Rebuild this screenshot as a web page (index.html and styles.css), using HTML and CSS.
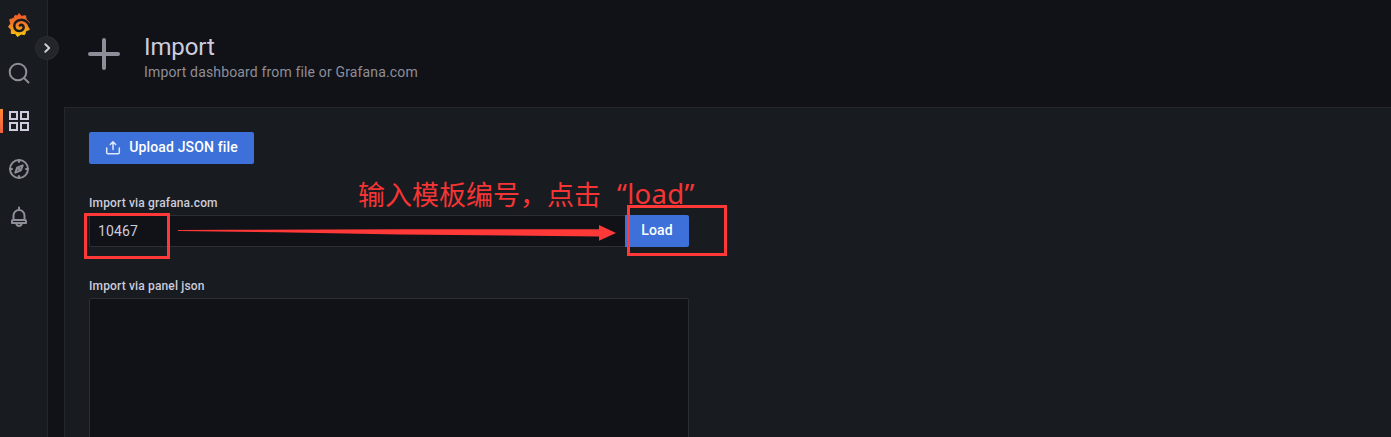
FILE: index.html
```html
<!DOCTYPE html>
<html lang="en">
<head>
<meta charset="utf-8">
<title>Import</title>
<link rel="stylesheet" href="styles.css">
</head>
<body>
<div class="app">
  <nav class="sidebar">
    <a class="logo"><svg width="24" height="26" viewBox="0 0 24 26">
      <defs><linearGradient id="flame" x1="0" y1="0" x2="0" y2="1"><stop offset="0" stop-color="#f05a28"/><stop offset=".45" stop-color="#f47a25"/><stop offset="1" stop-color="#fbca0a"/></linearGradient></defs>
      <path fill="url(#flame)" stroke="url(#flame)" stroke-width="1" stroke-linejoin="round" d="M12 1.500L14.300 4.300L18.500 3.700L19.200 7.500L22.300 10.500L20.800 13.500L22.300 17.500L18.700 19L17.700 22.600L14 22L10.500 24.500L8.300 21.500L4.300 21.500L4.300 17.700L1.500 14.800L3.700 11.700L2.700 7.500L6.700 6.500L8 3.500L10.500 4Z"/>
      <path class="swirl" d="M23 15C21 10 17.500 7.600 13.500 7.900C9.300 8.200 7 11.200 7.300 14.300C7.600 17.500 10 19.200 12.700 19C15.300 18.700 16.900 16.800 16.600 14.900C16.200 12.900 14 12.300 12.900 13.500"/>
    </svg></a>
    <a class="item"><svg width="24" height="24" viewBox="0 0 24 24"><circle cx="11" cy="11" r="8.300"/><path d="M17 17L21.500 21.500"/></svg></a>
    <a class="item active"><svg width="24" height="24" viewBox="0 0 24 24"><path d="M3 3H10V10H3ZM14 3H21V10H14ZM3 14H10V21H3ZM14 14H21V21H14Z"/></svg></a>
    <a class="item"><svg width="24" height="24" viewBox="0 0 24 24"><circle cx="12" cy="12" r="9"/><path d="M12 3V5M12 19V21M3 12H5M19 12H21M15.700 8.300L13.800 13.300L8.300 15.700L10.200 10.700Z"/><circle cx="12" cy="12" r=".6"/></svg></a>
    <a class="item"><svg width="24" height="24" viewBox="0 0 24 24"><path d="M12 2.500V5M6.500 15V10.500A5.500 5.500 0 0 1 17.500 10.500V15M6 15H18Q19 15 19 16V18H5V16Q5 15 6 15M9.200 18.500Q10 21 12 21T14.800 18.500"/></svg></a>
    <button class="toggle"><svg width="24" height="24" viewBox="0 0 24 24"><path d="M10.300 8.200L14.200 12L10.300 15.800"/></svg></button>
  </nav>
  <main class="main">
    <header class="header">
      <svg class="plus" width="32" height="32" viewBox="0 0 32 32"><path d="M16 2V30M2 16H30"/></svg>
      <div><h1>Import</h1><p>Import dashboard from file or Grafana.com</p></div>
    </header>
    <section class="panel">
      <button class="btn upload"><svg width="16" height="16" viewBox="0 0 16 16"><path d="M8 9.500V2M5.300 4.500L8 1.800L10.700 4.500M1.700 8V12.500Q1.700 13.700 2.900 13.700H13.100Q14.300 13.700 14.300 12.500V8"/></svg><span>Upload JSON file</span></button>
      <label class="label">Import via grafana.com</label>
      <div class="row"><div class="input">10467</div><button class="btn load">Load</button></div>
      <label class="label second">Import via panel json</label>
      <div class="textarea"></div>
    </section>
  </main>
  <div class="mark mark-input"></div>
  <div class="mark mark-load"></div>
  <svg class="arrow" width="440" height="20" viewBox="0 0 440 20"><path d="M0 8L52 7.800L222 7.300L421 7.200V3L438 11L421 18.800V14.500L222 12.500L100 10.300L0 9Z"/></svg>
  <div class="note"><span>输入模板编号，点击</span><span class="latin">“load”</span></div>
</div>
</body>
</html>
```
FILE: styles.css
```css
* { box-sizing: border-box; }
body { margin: 0; background: #111217; color: #ccccdc; font-family: Roboto, "Liberation Sans", sans-serif; }
.app { position: relative; display: flex; width: 100%; height: 437px; overflow: hidden; }
.sidebar { position: relative; flex: none; width: 48px; padding-top: 1px; background: #181b1f; border-right: 1px solid #25272c; }
.logo, .item { display: flex; align-items: center; justify-content: center; width: 38px; height: 48px; }
.logo svg { display: block; }
.item { position: relative; }
.item svg { fill: none; stroke: #8e8e99; stroke-width: 2; stroke-linecap: round; stroke-linejoin: round; }
.item.active svg { stroke: #ccccdc; stroke-linejoin: miter; }
.item.active::before { content: ""; position: absolute; left: 0; top: 12px; width: 3px; height: 24px; background: linear-gradient(#ff8833, #f55f3e); }
.swirl { fill: none; stroke: #181b1f; stroke-width: 2.5; stroke-linecap: round; }
.toggle { position: absolute; left: 35px; top: 36px; width: 24px; height: 24px; padding: 0; border: 1px solid #2b2d32; border-radius: 50%; background: #222529; display: flex; align-items: center; justify-content: center; }
.toggle svg { flex: none; fill: none; stroke: #ccccdc; stroke-width: 2; stroke-linecap: round; stroke-linejoin: round; }
.main { flex: 1; min-width: 0; display: flex; flex-direction: column; padding-left: 16px; }
.header { display: flex; flex: none; height: 107px; padding: 32px 0 0 24px; gap: 24px; }
.plus { margin-top: 6px; fill: none; stroke: #8e8e99; stroke-width: 4; stroke-linecap: round; }
h1 { margin: 0; font-size: 24px; line-height: 30px; font-weight: 400; letter-spacing: -.1px; }
p { margin: 0; color: #8e8e99; font-size: 14px; line-height: 20px; letter-spacing: .15px; }
.panel { flex: 1; min-height: 0; border: 1px solid #25272c; border-width: 1px 0 0 1px; background: #181b1f; padding: 24px; }
.btn { display: flex; align-items: center; justify-content: center; height: 32px; border: 0; border-radius: 2px; padding: 0 0 2px; background: #3d71d9; color: #fff; font: 500 14px/22px Roboto, sans-serif; letter-spacing: .15px; }
.upload { width: 165px; gap: 8px; }
.upload svg { margin-top: 2px; fill: none; stroke: #dfe8fa; stroke-width: 1.5; stroke-linecap: round; stroke-linejoin: round; }
.label { display: block; margin-top: 32px; height: 19px; font-size: 12px; line-height: 15px; font-weight: 500; letter-spacing: .15px; }
.row { display: flex; width: 600px; }
.input { flex: 1; height: 32px; padding: 0 8px; border: 1px solid #2d2e33; border-right: 0; border-radius: 2px 0 0 2px; background: #111217; font-size: 14px; line-height: 30px; letter-spacing: .15px; }
.load { width: 64px; border-radius: 0 2px 2px 0; }
.second { margin-top: 32px; }
.textarea { width: 600px; height: 200px; border: 1px solid #2d2e33; border-radius: 2px; background: #111217; }
.mark { position: absolute; border: 3px solid #ff3838; }
.mark-input { left: 84px; top: 213px; width: 86px; height: 46px; }
.mark-load { left: 627px; top: 205px; width: 100px; height: 51px; }
.arrow { position: absolute; left: 178px; top: 222px; fill: #ff3838; }
.note { position: absolute; left: 358px; top: 174px; display: flex; white-space: nowrap; color: #f53535; font: 400 27px/40px "Noto Sans CJK SC", sans-serif; }
.latin { margin-left: 16px; font-family: "Noto Sans", sans-serif; font-size: 27.5px; letter-spacing: .3px; }
```
